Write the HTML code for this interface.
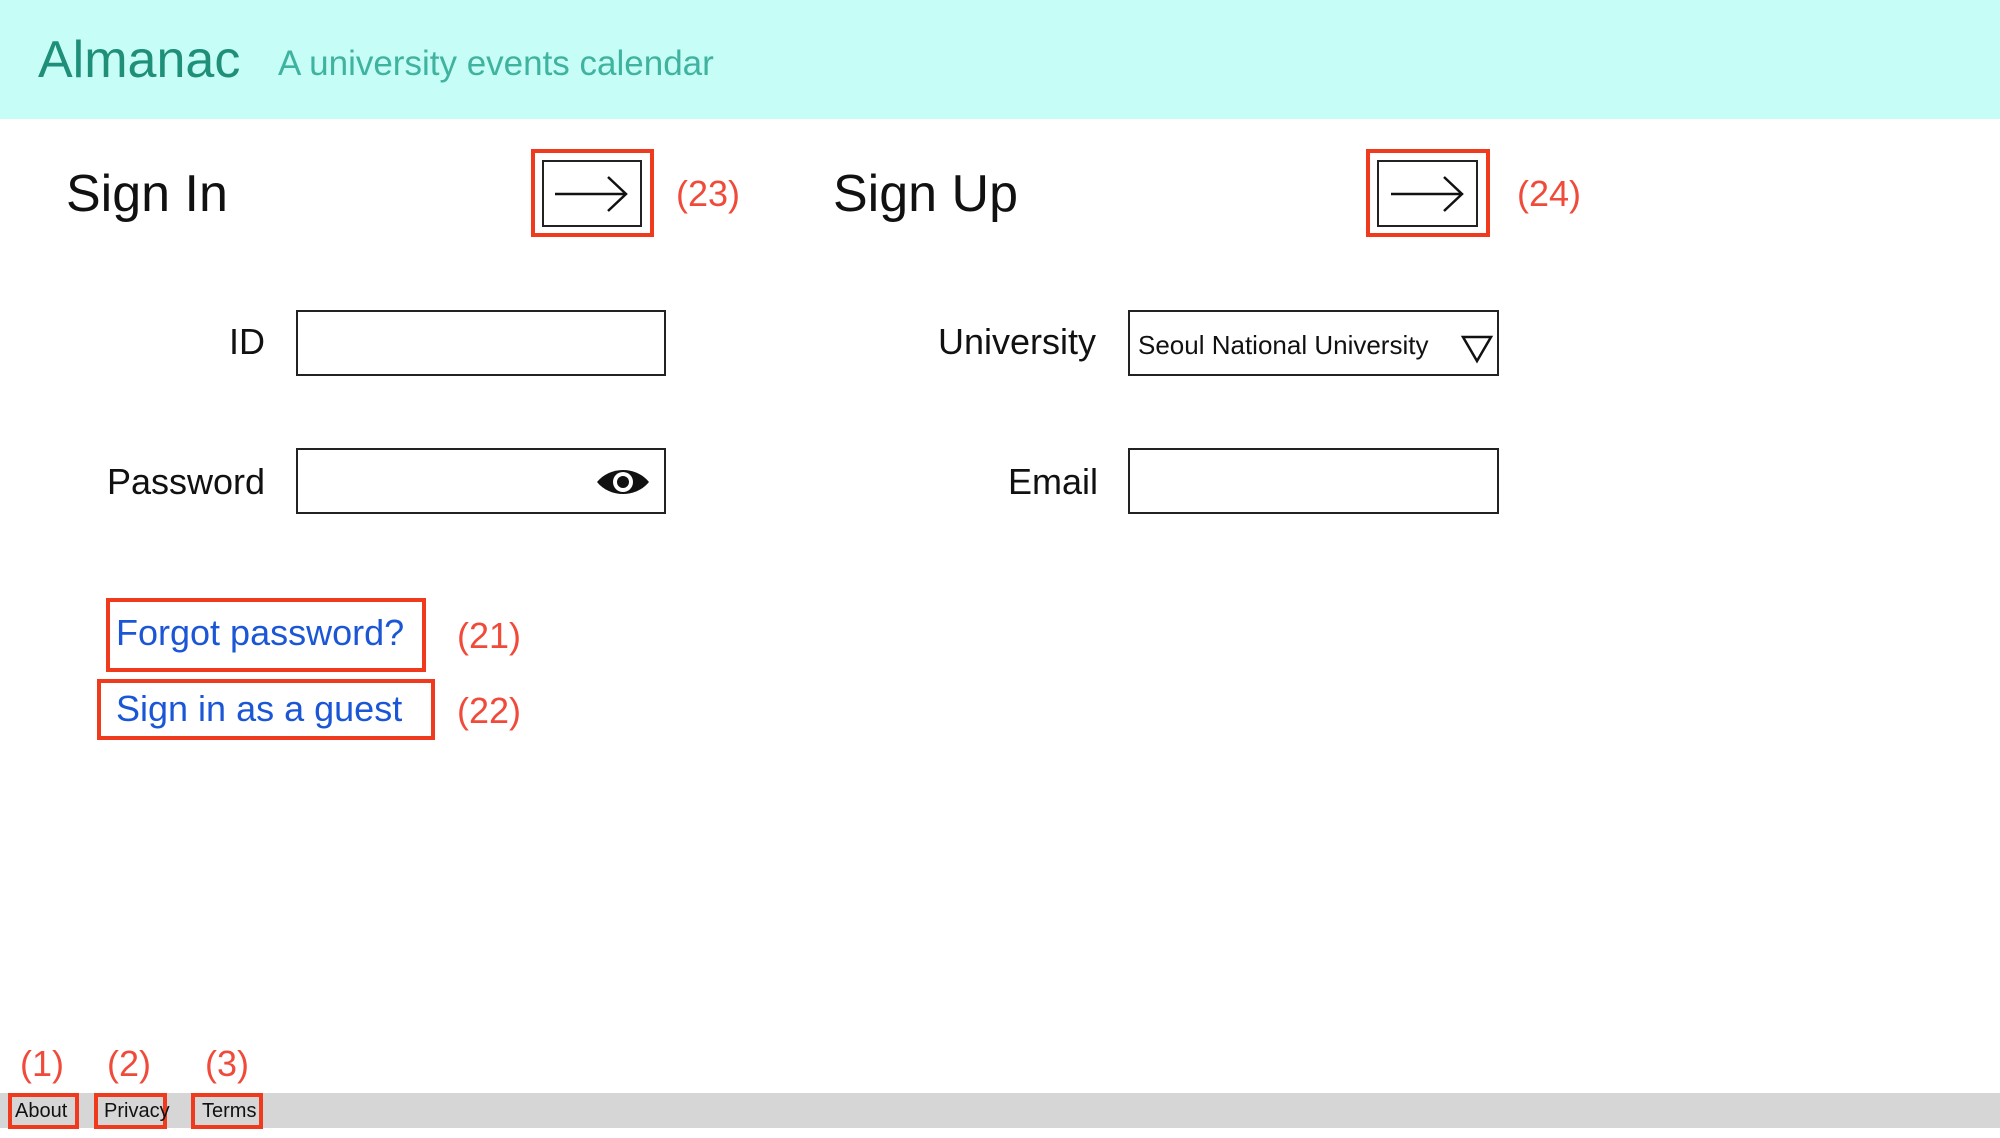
<!DOCTYPE html>
<html><head><meta charset="utf-8"><style>
*{margin:0;padding:0;box-sizing:border-box}
body{width:2000px;height:1138px;background:#fff;position:relative;overflow:hidden;font-family:"Liberation Sans",sans-serif}
.a{position:absolute;white-space:nowrap}
.red{position:absolute;border:4px solid #f03a1e}
.lab{color:#f04a3a;font-size:36px}
.inp{position:absolute;border:2px solid #222;background:#fff}
.fl{font-size:36px;color:#111}
.link{color:#1a56d6;font-size:36px}
</style></head><body>
<div class="a" style="left:0;top:0;width:2000px;height:119px;background:#c6fdf6"></div>
<div class="a" style="left:38px;top:30px;font-size:52px;color:#1f8f7a">Almanac</div>
<div class="a" style="left:278px;top:44px;font-size:35px;color:#3fb3a0">A university events calendar</div>

<div class="a" style="left:66px;top:164px;font-size:52px;color:#111">Sign In</div>
<div class="red" style="left:531px;top:149px;width:123px;height:88px"></div>
<div class="a" style="left:542px;top:160px;width:100px;height:67px;border:2px solid #222"></div>
<svg class="a" style="left:552px;top:172px" width="80" height="44"><path d="M3 22H74M56 5L74 22L56 39" stroke="#111" stroke-width="2.5" fill="none"/></svg>
<div class="a lab" style="left:676px;top:173px">(23)</div>

<div class="a" style="left:833px;top:164px;font-size:52px;color:#111">Sign Up</div>
<div class="red" style="left:1366px;top:149px;width:124px;height:88px"></div>
<div class="a" style="left:1377px;top:160px;width:101px;height:67px;border:2px solid #222"></div>
<svg class="a" style="left:1388px;top:172px" width="80" height="44"><path d="M3 22H74M56 5L74 22L56 39" stroke="#111" stroke-width="2.5" fill="none"/></svg>
<div class="a lab" style="left:1517px;top:173px">(24)</div>

<div class="a fl" style="left:205px;width:60px;text-align:right;top:321px">ID</div>
<div class="inp" style="left:296px;top:310px;width:370px;height:66px"></div>
<div class="a fl" style="left:65px;width:200px;text-align:right;top:461px">Password</div>
<div class="inp" style="left:296px;top:448px;width:370px;height:66px"></div>
<svg class="a" style="left:594px;top:464px" width="58" height="36"><path d="M3 18C16 2 42 2 55 18C42 34 16 34 3 18Z" fill="#111"/><circle cx="29" cy="18" r="10" fill="#fff"/><circle cx="29" cy="18" r="6" fill="#111"/></svg>

<div class="a fl" style="left:880px;width:216px;text-align:right;top:321px">University</div>
<div class="inp" style="left:1128px;top:310px;width:371px;height:66px"></div>
<div class="a" style="left:1138px;top:330px;font-size:26px;color:#111">Seoul National University</div>
<svg class="a" style="left:1460px;top:334px" width="34" height="30"><path d="M3 3H31L17 27Z" stroke="#111" stroke-width="2.5" fill="none"/></svg>
<div class="a fl" style="left:900px;width:198px;text-align:right;top:461px">Email</div>
<div class="inp" style="left:1128px;top:448px;width:371px;height:66px"></div>

<div class="red" style="left:106px;top:598px;width:320px;height:74px"></div>
<div class="a link" style="left:116px;top:612px">Forgot password?</div>
<div class="a lab" style="left:457px;top:615px">(21)</div>
<div class="red" style="left:97px;top:679px;width:338px;height:61px"></div>
<div class="a link" style="left:116px;top:688px">Sign in as a guest</div>
<div class="a lab" style="left:457px;top:690px">(22)</div>

<div class="a" style="left:0;top:1093px;width:2000px;height:35px;background:#d6d6d6"></div>
<div class="a lab" style="left:20px;top:1043px">(1)</div>
<div class="a lab" style="left:107px;top:1043px">(2)</div>
<div class="a lab" style="left:205px;top:1043px">(3)</div>
<div class="red" style="left:8px;top:1093px;width:71px;height:36px"></div>
<div class="a" style="left:15px;top:1100px;font-size:20px;color:#111">About</div>
<div class="red" style="left:94px;top:1093px;width:73px;height:36px"></div>
<div class="a" style="left:104px;top:1100px;font-size:20px;color:#111">Privacy</div>
<div class="red" style="left:191px;top:1093px;width:72px;height:36px"></div>
<div class="a" style="left:202px;top:1100px;font-size:20px;color:#111">Terms</div>
</body></html>
